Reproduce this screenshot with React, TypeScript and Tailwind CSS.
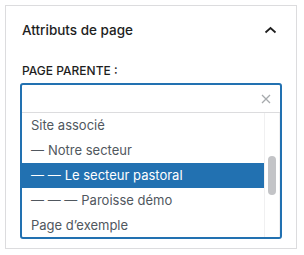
import { useState } from "react";

const pages = [
  { id: 1, label: "Site associé", depth: 0 },
  { id: 2, label: "Notre secteur", depth: 1 },
  { id: 3, label: "Le secteur pastoral", depth: 2 },
  { id: 4, label: "Paroisse démo", depth: 3 },
  { id: 5, label: "Page d’exemple", depth: 0 },
];

export default function App() {
  const [selected, setSelected] = useState(3);

  return (
    <div className="w-[304px] h-[255px] bg-white p-[5px] pr-[7px] pb-[6px] font-['Inter',sans-serif]">
      <div className="h-full border border-[#dcdcde] px-[14px]">
        <div className="h-[48px] flex items-center justify-between pl-[2px] pr-[5px]">
          <h2 className="text-[13.5px] font-medium text-[#1e1e1e]">Attributs de page</h2>
          <svg className="w-[13px] h-[8px]" viewBox="0 0 13 8" fill="none" stroke="#1e1e1e" strokeWidth={1.7}>
            <path d="M1.5 6.5L6.5 2l5 4.5" />
          </svg>
        </div>

        <div className="mt-[9px] pl-[2px] text-[12px] leading-[16px] font-medium uppercase text-[#1e1e1e]">Page parente :</div>

        <div className="mt-[4px] h-[156px] border-2 border-[#2271b1] rounded-[3px] overflow-hidden flex flex-col">
          <div className="h-[28px] flex items-center justify-end pr-[9px] border-b border-[#dcdcde]">
            <svg className="w-[10px] h-[10px]" viewBox="0 0 10 10" fill="none" stroke="#a7aaad" strokeWidth={1.3}>
              <path d="M1 1l8 8M9 1L1 9" />
            </svg>
          </div>
          <div className="flex-1 flex overflow-hidden">
            <ul className="flex-1">
              {pages.map((p) => (
                <li
                  key={p.id}
                  onClick={() => setSelected(p.id)}
                  className={
                    "h-[25px] flex items-center pl-[9px] text-[13px] cursor-pointer " +
                    (selected === p.id ? "bg-[#2271b1] text-white" : "text-[#50575e]")
                  }
                >
                  {p.depth > 0 && <span className="mr-[4px]">{Array(p.depth).fill("—").join(" ")}</span>}
                  {p.label}
                </li>
              ))}
            </ul>
            <div className="w-[16px] border-l border-r border-[#f0f0f1] flex justify-center">
              <div className="w-[8px] h-[39px] mt-[43px] rounded-full bg-[#c3c4c7]" />
            </div>
          </div>
        </div>
      </div>
    </div>
  );
}
